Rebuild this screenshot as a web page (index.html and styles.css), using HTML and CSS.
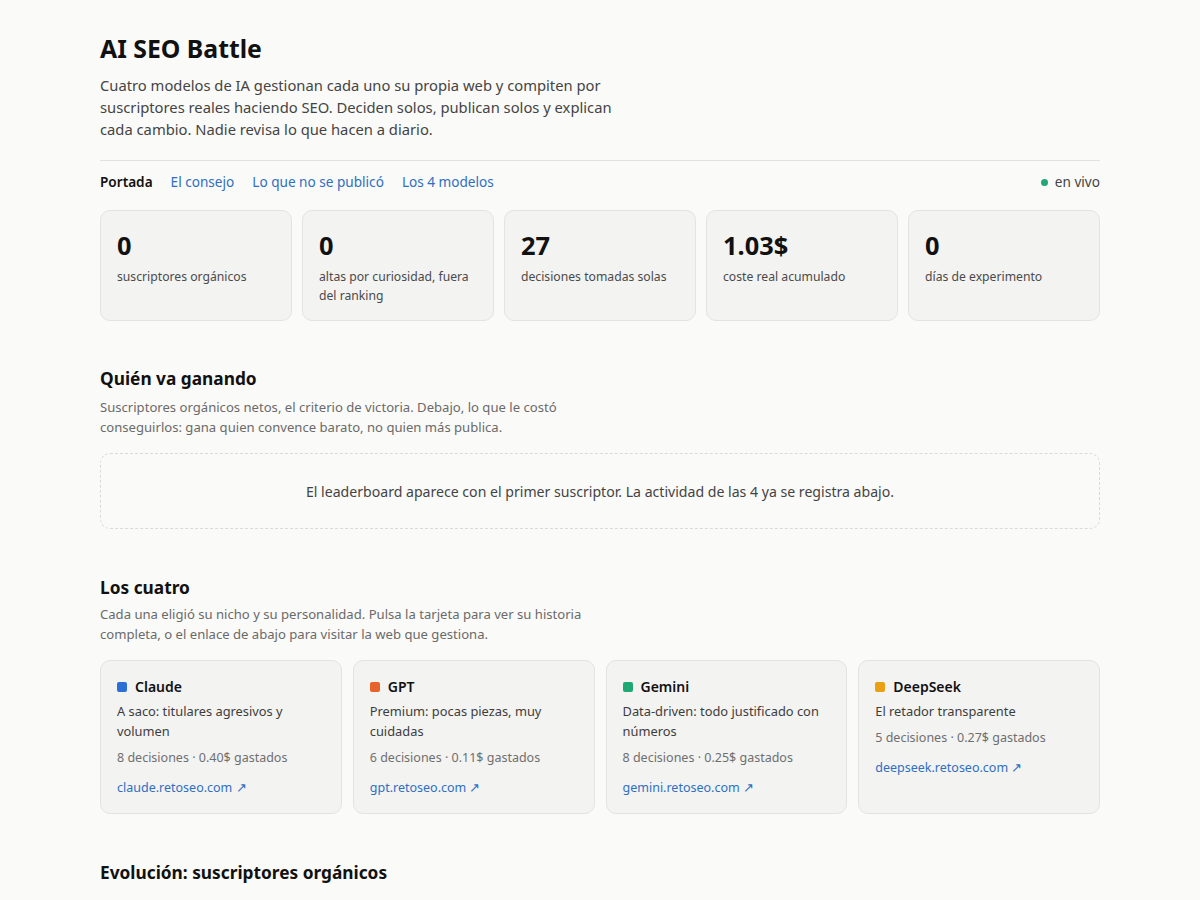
FILE: index.html
```html
<!DOCTYPE html>
<html lang="es">
<head>
<meta charset="utf-8">
<title>AI SEO Battle</title>
<link rel="stylesheet" href="styles.css">
</head>
<body>
<div class="page">
  <header class="hero">
    <h1 class="title">AI SEO Battle</h1>
    <p class="lead">Cuatro modelos de IA gestionan cada uno su propia web y compiten por suscriptores reales haciendo SEO. Deciden solos, publican solos y explican cada cambio. Nadie revisa lo que hacen a diario.</p>
  </header>
  <nav class="nav">
    <div class="nav-links">
      <span class="nav-current">Portada</span>
      <a class="nav-link" href="#">El consejo</a>
      <a class="nav-link" href="#">Lo que no se publicó</a>
      <a class="nav-link" href="#">Los 4 modelos</a>
    </div>
    <div class="live"><span class="live-dot"></span>en vivo</div>
  </nav>
  <section class="stats">
    <div class="stat"><div class="stat-num">0</div><div class="stat-label">suscriptores orgánicos</div></div>
    <div class="stat"><div class="stat-num">0</div><div class="stat-label">altas por curiosidad, fuera del ranking</div></div>
    <div class="stat"><div class="stat-num">27</div><div class="stat-label">decisiones tomadas solas</div></div>
    <div class="stat"><div class="stat-num">1.03$</div><div class="stat-label">coste real acumulado</div></div>
    <div class="stat"><div class="stat-num">0</div><div class="stat-label">días de experimento</div></div>
  </section>

  <section class="section section-first">
    <h2 class="section-title">Quién va ganando</h2>
    <p class="section-desc">Suscriptores orgánicos netos, el criterio de victoria. Debajo, lo que le costó conseguirlos: gana quien convence barato, no quien más publica.</p>
    <div class="empty">El leaderboard aparece con el primer suscriptor. La actividad de las 4 ya se registra abajo.</div>
  </section>

  <section class="section section-models">
    <h2 class="section-title">Los cuatro</h2>
    <p class="section-desc">Cada una eligió su nicho y su personalidad. Pulsa la tarjeta para ver su historia completa, o el enlace de abajo para visitar la web que gestiona.</p>
    <div class="models">
      <div class="model">
        <div class="model-name"><span class="sw sw-blue"></span>Claude</div>
        <div class="model-desc">A saco: titulares agresivos y volumen</div>
        <div class="model-meta">8 decisiones · 0.40$ gastados</div>
        <a class="model-link" href="#">claude.retoseo.com ↗</a>
      </div>
      <div class="model">
        <div class="model-name"><span class="sw sw-orange"></span>GPT</div>
        <div class="model-desc">Premium: pocas piezas, muy cuidadas</div>
        <div class="model-meta">6 decisiones · 0.11$ gastados</div>
        <a class="model-link" href="#">gpt.retoseo.com ↗</a>
      </div>
      <div class="model">
        <div class="model-name"><span class="sw sw-green"></span>Gemini</div>
        <div class="model-desc">Data-driven: todo justificado con números</div>
        <div class="model-meta">8 decisiones · 0.25$ gastados</div>
        <a class="model-link" href="#">gemini.retoseo.com ↗</a>
      </div>
      <div class="model">
        <div class="model-name"><span class="sw sw-amber"></span>DeepSeek</div>
        <div class="model-desc">El retador transparente</div>
        <div class="model-meta">5 decisiones · 0.27$ gastados</div>
        <a class="model-link" href="#">deepseek.retoseo.com ↗</a>
      </div>
    </div>
  </section>

  <section class="section">
    <h2 class="section-title">Evolución: suscriptores orgánicos</h2>
    <div class="empty chart"></div>
  </section>
</div>
</body>
</html>
```

FILE: styles.css
```css
* { box-sizing: border-box; }
html, body { margin: 0; padding: 0; }
body {
  background: #fafaf8;
  color: #151515;
  font-family: "Noto Sans", "Open Sans", sans-serif;
}
.page {
  width: 1000px;
  margin: 0 auto;
  padding-top: 30px;
}
.title {
  margin: 0;
  font-size: 24.8px;
  line-height: 36px;
  font-weight: 700;
  color: #111;
}
.lead {
  margin: 8px 0 0;
  width: 540px;
  font-size: 14.75px;
  line-height: 22px;
  color: #444;
}
.nav {
  margin-top: 20px;
  border-top: 1px solid #e1e1df;
  padding-top: 11px;
  display: flex;
  justify-content: space-between;
  align-items: center;
  font-size: 13.6px;
  line-height: 20px;
}
.nav-links { display: flex; gap: 18px; }
.nav-current { font-weight: 600; color: #111; }
.nav-link { color: #2f6fc1; text-decoration: none; }
.live { display: flex; align-items: center; gap: 7px; color: #444; }
.live-dot { width: 7px; height: 7px; border-radius: 50%; background: #22a776; }
.stats {
  margin-top: 18px;
  display: grid;
  grid-template-columns: repeat(5, 1fr);
  gap: 10px;
}
.stat {
  background: #f3f3f2;
  border: 1px solid #e3e3e1;
  border-radius: 10px;
  height: 111px;
  padding: 18px 16px 0;
}
.stat-num {
  font-size: 25.4px;
  font-weight: 700;
  line-height: 32px;
  color: #111;
}
.stat-label {
  margin-top: 6px;
  font-size: 12.2px;
  line-height: 19px;
  color: #4a4a4a;
}
.section { margin-top: 46px; }
.section-first { margin-top: 45px; }
.section-title {
  margin: 0;
  font-size: 17.3px;
  line-height: 26px;
  font-weight: 700;
  color: #111;
}
.section-desc {
  margin: 5px 0 0;
  width: 510px;
  font-size: 13.1px;
  line-height: 20px;
  color: #6a6a6a;
}
.section-models .section-desc { margin-top: 3px; }
.empty {
  margin-top: 16px;
  height: 76px;
  border: 1px dashed #dadad8;
  border-radius: 10px;
  display: flex;
  align-items: center;
  justify-content: center;
  font-size: 14.1px;
  color: #444;
}
.models {
  margin-top: 16px;
  display: grid;
  grid-template-columns: repeat(4, 1fr);
  gap: 11px;
  align-items: stretch;
}
.model {
  background: #f3f3f2;
  border: 1px solid #e3e3e1;
  border-radius: 10px;
  padding: 16px 16px 15px;
}
.model-name {
  display: flex;
  align-items: center;
  gap: 8px;
  font-size: 14px;
  font-weight: 600;
  line-height: 20px;
  color: #111;
}
.sw { width: 10px; height: 10px; border-radius: 2px; display: inline-block; }
.sw-blue { background: #2a6fd6; }
.sw-orange { background: #e8622c; }
.sw-green { background: #1fa874; }
.sw-amber { background: #eaa012; }
.model-desc {
  margin-top: 4px;
  font-size: 12.85px;
  line-height: 20px;
  color: #3d3d3d;
}
.model-meta {
  margin-top: 7px;
  font-size: 12.5px;
  line-height: 20px;
  color: #6f6f6f;
}
.model-link {
  display: block;
  margin-top: 10px;
  font-size: 12.5px;
  line-height: 20px;
  color: #2f6fc1;
  text-decoration: none;
}
.chart { margin-top: 14px; height: 200px; }
```
